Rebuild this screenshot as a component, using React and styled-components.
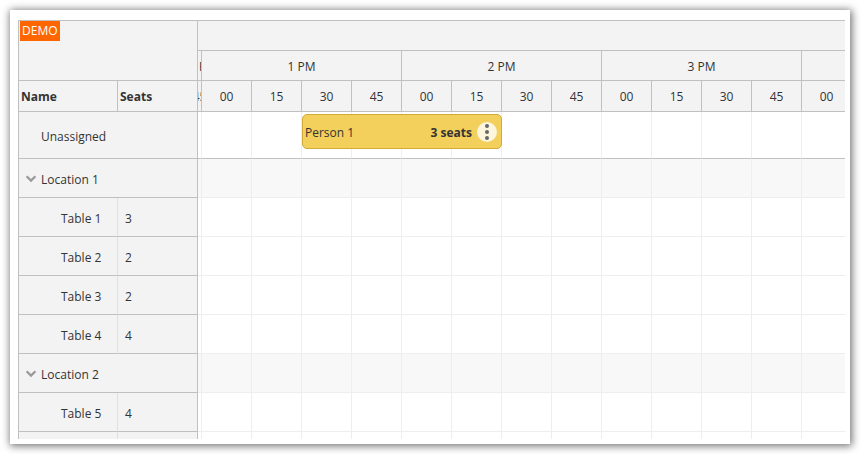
import React, { useState } from "react";
import styled, { createGlobalStyle } from "styled-components";

const SLOTS = ["00", "15", "30", "45"];
const HOURS = ["1 PM", "2 PM", "3 PM", "4 PM"];

const LOCATIONS = [
  {
    name: "Location 1",
    tables: [
      { name: "Table 1", seats: 3 },
      { name: "Table 2", seats: 2 },
      { name: "Table 3", seats: 2 },
      { name: "Table 4", seats: 4 },
    ],
  },
  {
    name: "Location 2",
    tables: [
      { name: "Table 5", seats: 4 },
      { name: "Table 6", seats: 4 },
    ],
  },
];

const RESERVATION = { name: "Person 1", seats: 3, start: 2, slots: 4 };

const slotList = HOURS.flatMap((hour) =>
  SLOTS.map((slot) => ({ key: `${hour}-${slot}`, label: slot }))
);

// every slot adds its own 1px border to the width of the event
const Reservation = ({ name, seats, slots }) => (
  <EventBox style={{ width: `calc(${slots * 100}% + ${slots}px)` }}>
    <EventName>{name}</EventName>
    <EventSeats>{seats} seats</EventSeats>
    <MenuButton type="button" aria-label={`${name} menu`}>
      <svg width="4" height="16" viewBox="0 0 4 16" fill="#666">
        <circle cx="2" cy="2" r="2" />
        <circle cx="2" cy="8" r="2" />
        <circle cx="2" cy="14" r="2" />
      </svg>
    </MenuButton>
  </EventBox>
);

const App = () => {
  const [closed, setClosed] = useState({});

  const toggle = (name) =>
    setClosed((prev) => ({ ...prev, [name]: !prev[name] }));

  const rows = LOCATIONS.flatMap((location) => [
    { name: location.name, group: true },
    ...(closed[location.name] ? [] : location.tables),
  ]);

  return (
    <>
      <GlobalStyle />
      <Card>
        <Scheduler>
          <ResourcePane>
            <Corner>
              <DemoTag>DEMO</DemoTag>
            </Corner>
            <ResourceTable>
              <colgroup>
                <NameCol />
                <col />
              </colgroup>
              <thead>
                <tr>
                  <ColumnTitle $divider>Name</ColumnTitle>
                  <ColumnTitle>Seats</ColumnTitle>
                </tr>
              </thead>
              <tbody>
                <tr>
                  <ResourceCell colSpan={2} $indent={22} $tall>
                    Unassigned
                  </ResourceCell>
                </tr>
                {rows.map((row) =>
                  row.group ? (
                    <tr key={row.name}>
                      <ResourceCell colSpan={2} $indent={6}>
                        <GroupButton
                          type="button"
                          aria-expanded={!closed[row.name]}
                          onClick={() => toggle(row.name)}
                        >
                          <Chevron
                            $closed={closed[row.name]}
                            width="12"
                            height="10"
                            viewBox="0 0 12 10"
                          >
                            <path
                              d="M1.6 1.2 6 5.6 10.4 1.2"
                              fill="none"
                              stroke="#999"
                              strokeWidth="2.2"
                            />
                          </Chevron>
                          {row.name}
                        </GroupButton>
                      </ResourceCell>
                    </tr>
                  ) : (
                    <tr key={row.name}>
                      <ResourceCell $indent={42} $divider>
                        {row.name}
                      </ResourceCell>
                      <ResourceCell $indent={7}>{row.seats}</ResourceCell>
                    </tr>
                  )
                )}
              </tbody>
            </ResourceTable>
          </ResourcePane>

          <TimePane>
            <TimeTable>
              <colgroup>
                <EdgeCol />
                {slotList.map((slot) => (
                  <col key={slot.key} />
                ))}
              </colgroup>
              <thead>
                <tr>
                  <TimeTitle colSpan={slotList.length + 1} />
                </tr>
                <tr>
                  <TimeTitle>
                    <Label>12 PM</Label>
                  </TimeTitle>
                  {HOURS.map((hour) => (
                    <TimeTitle key={hour} colSpan={SLOTS.length}>
                      <Label>{hour}</Label>
                    </TimeTitle>
                  ))}
                </tr>
                <tr>
                  <TimeTitle $last>
                    <Label>45</Label>
                  </TimeTitle>
                  {slotList.map((slot) => (
                    <TimeTitle key={slot.key} $last>
                      <Label>{slot.label}</Label>
                    </TimeTitle>
                  ))}
                </tr>
              </thead>
              <tbody>
                <tr>
                  <Slot $tall />
                  {slotList.map((slot, index) => (
                    <Slot key={slot.key} $tall>
                      {index === RESERVATION.start && (
                        <Reservation {...RESERVATION} />
                      )}
                    </Slot>
                  ))}
                </tr>
                {rows.map((row) => (
                  <tr key={row.name}>
                    <Slot $group={row.group} />
                    {slotList.map((slot) => (
                      <Slot key={slot.key} $group={row.group} />
                    ))}
                  </tr>
                ))}
              </tbody>
            </TimeTable>
          </TimePane>
        </Scheduler>
      </Card>
    </>
  );
};

export default App;

const GlobalStyle = createGlobalStyle`
  * {
    box-sizing: border-box;
  }

  body {
    margin: 0;
    background: #ffffff;
    color: #333333;
    font-family: "Open Sans", "Noto Sans", sans-serif;
    font-size: 12px;
    line-height: 18px;
  }
`;

const Card = styled.main`
  display: flex;
  height: calc(100vh - 20px);
  margin: 10px;
  padding: 10px 5px 5px 8px;
  background: #ffffff;
  box-shadow: 1px 1px 8px 1px rgba(0, 0, 0, 0.56);
`;

const Scheduler = styled.div`
  display: flex;
  flex: 1;
  min-width: 0;
  border-top: 1px solid #c0c0c0;
  border-left: 1px solid #c0c0c0;
  overflow: hidden;
`;

const ResourcePane = styled.section`
  flex: none;
  width: 179px;
  border-right: 1px solid #c0c0c0;
  background: #f3f3f3;
`;

const Corner = styled.div`
  height: 60px;
  padding-left: 1px;
  border-bottom: 1px solid #c0c0c0;
`;

const DemoTag = styled.span`
  display: inline-block;
  padding: 1px 2px;
  background: #ff6600;
  color: #ffffff;
`;

const ResourceTable = styled.table`
  width: 100%;
  table-layout: fixed;
  border-collapse: separate;
  border-spacing: 0;
`;

const NameCol = styled.col`
  width: 99px;
`;

const ColumnTitle = styled.th`
  height: 31px;
  padding: 2px 2px 0;
  border-right: ${({ $divider }) => ($divider ? "1px solid #c0c0c0" : "0")};
  border-bottom: 1px solid #c0c0c0;
  font-weight: 700;
  text-align: left;
`;

const ResourceCell = styled.td`
  height: ${({ $tall }) => ($tall ? 47 : 39)}px;
  padding: 4px 0 0 ${({ $indent }) => $indent}px;
  border-right: ${({ $divider }) => ($divider ? "1px solid #e0e0e0" : "0")};
  border-bottom: 1px solid #c0c0c0;
`;

const GroupButton = styled.button`
  display: flex;
  align-items: center;
  gap: 4px;
  padding: 0;
  border: 0;
  background: none;
  color: inherit;
  font: inherit;
  cursor: pointer;
`;

const Chevron = styled.svg`
  transform: ${({ $closed }) => ($closed ? "rotate(-90deg)" : "none")};
`;

const TimePane = styled.section`
  flex: 1;
  min-width: 0;
  overflow: hidden;
`;

const TimeTable = styled.table`
  width: 100%;
  min-width: 804px;
  table-layout: fixed;
  border-collapse: separate;
  border-spacing: 0;
`;

const EdgeCol = styled.col`
  width: 4px;
`;

const TimeTitle = styled.th`
  height: ${({ $last }) => ($last ? 31 : 30)}px;
  padding: 2px 0 0;
  border-right: 1px solid #c0c0c0;
  border-bottom: 1px solid #c0c0c0;
  background: #f3f3f3;
  font-weight: 400;
`;

const Label = styled.div`
  display: flex;
  justify-content: center;
  overflow: hidden;
  white-space: nowrap;
`;

const Slot = styled.td`
  position: relative;
  height: ${({ $tall }) => ($tall ? 47 : 39)}px;
  padding: 0;
  border-right: 1px solid #eeeeee;
  border-bottom: 1px solid ${({ $tall }) => ($tall ? "#c0c0c0" : "#eeeeee")};
  background: ${({ $group }) => ($group ? "#f8f8f8" : "#ffffff")};
`;

const EventBox = styled.div`
  position: absolute;
  z-index: 1;
  top: 2px;
  left: 0;
  display: flex;
  align-items: center;
  height: 35px;
  padding: 0 4px 0 2px;
  border: 1px solid #d0ab36;
  border-radius: 5px;
  background: #f3cf5c;
`;

const EventName = styled.span`
  flex: 1;
  padding-top: 2px;
`;

const EventSeats = styled.strong`
  padding-top: 2px;
  margin-right: 5px;
  font-weight: 700;
`;

const MenuButton = styled.button`
  display: flex;
  align-items: center;
  justify-content: center;
  width: 20px;
  height: 20px;
  padding: 0;
  border: 0;
  border-radius: 50%;
  background: #fdf5de;
  cursor: pointer;
`;
